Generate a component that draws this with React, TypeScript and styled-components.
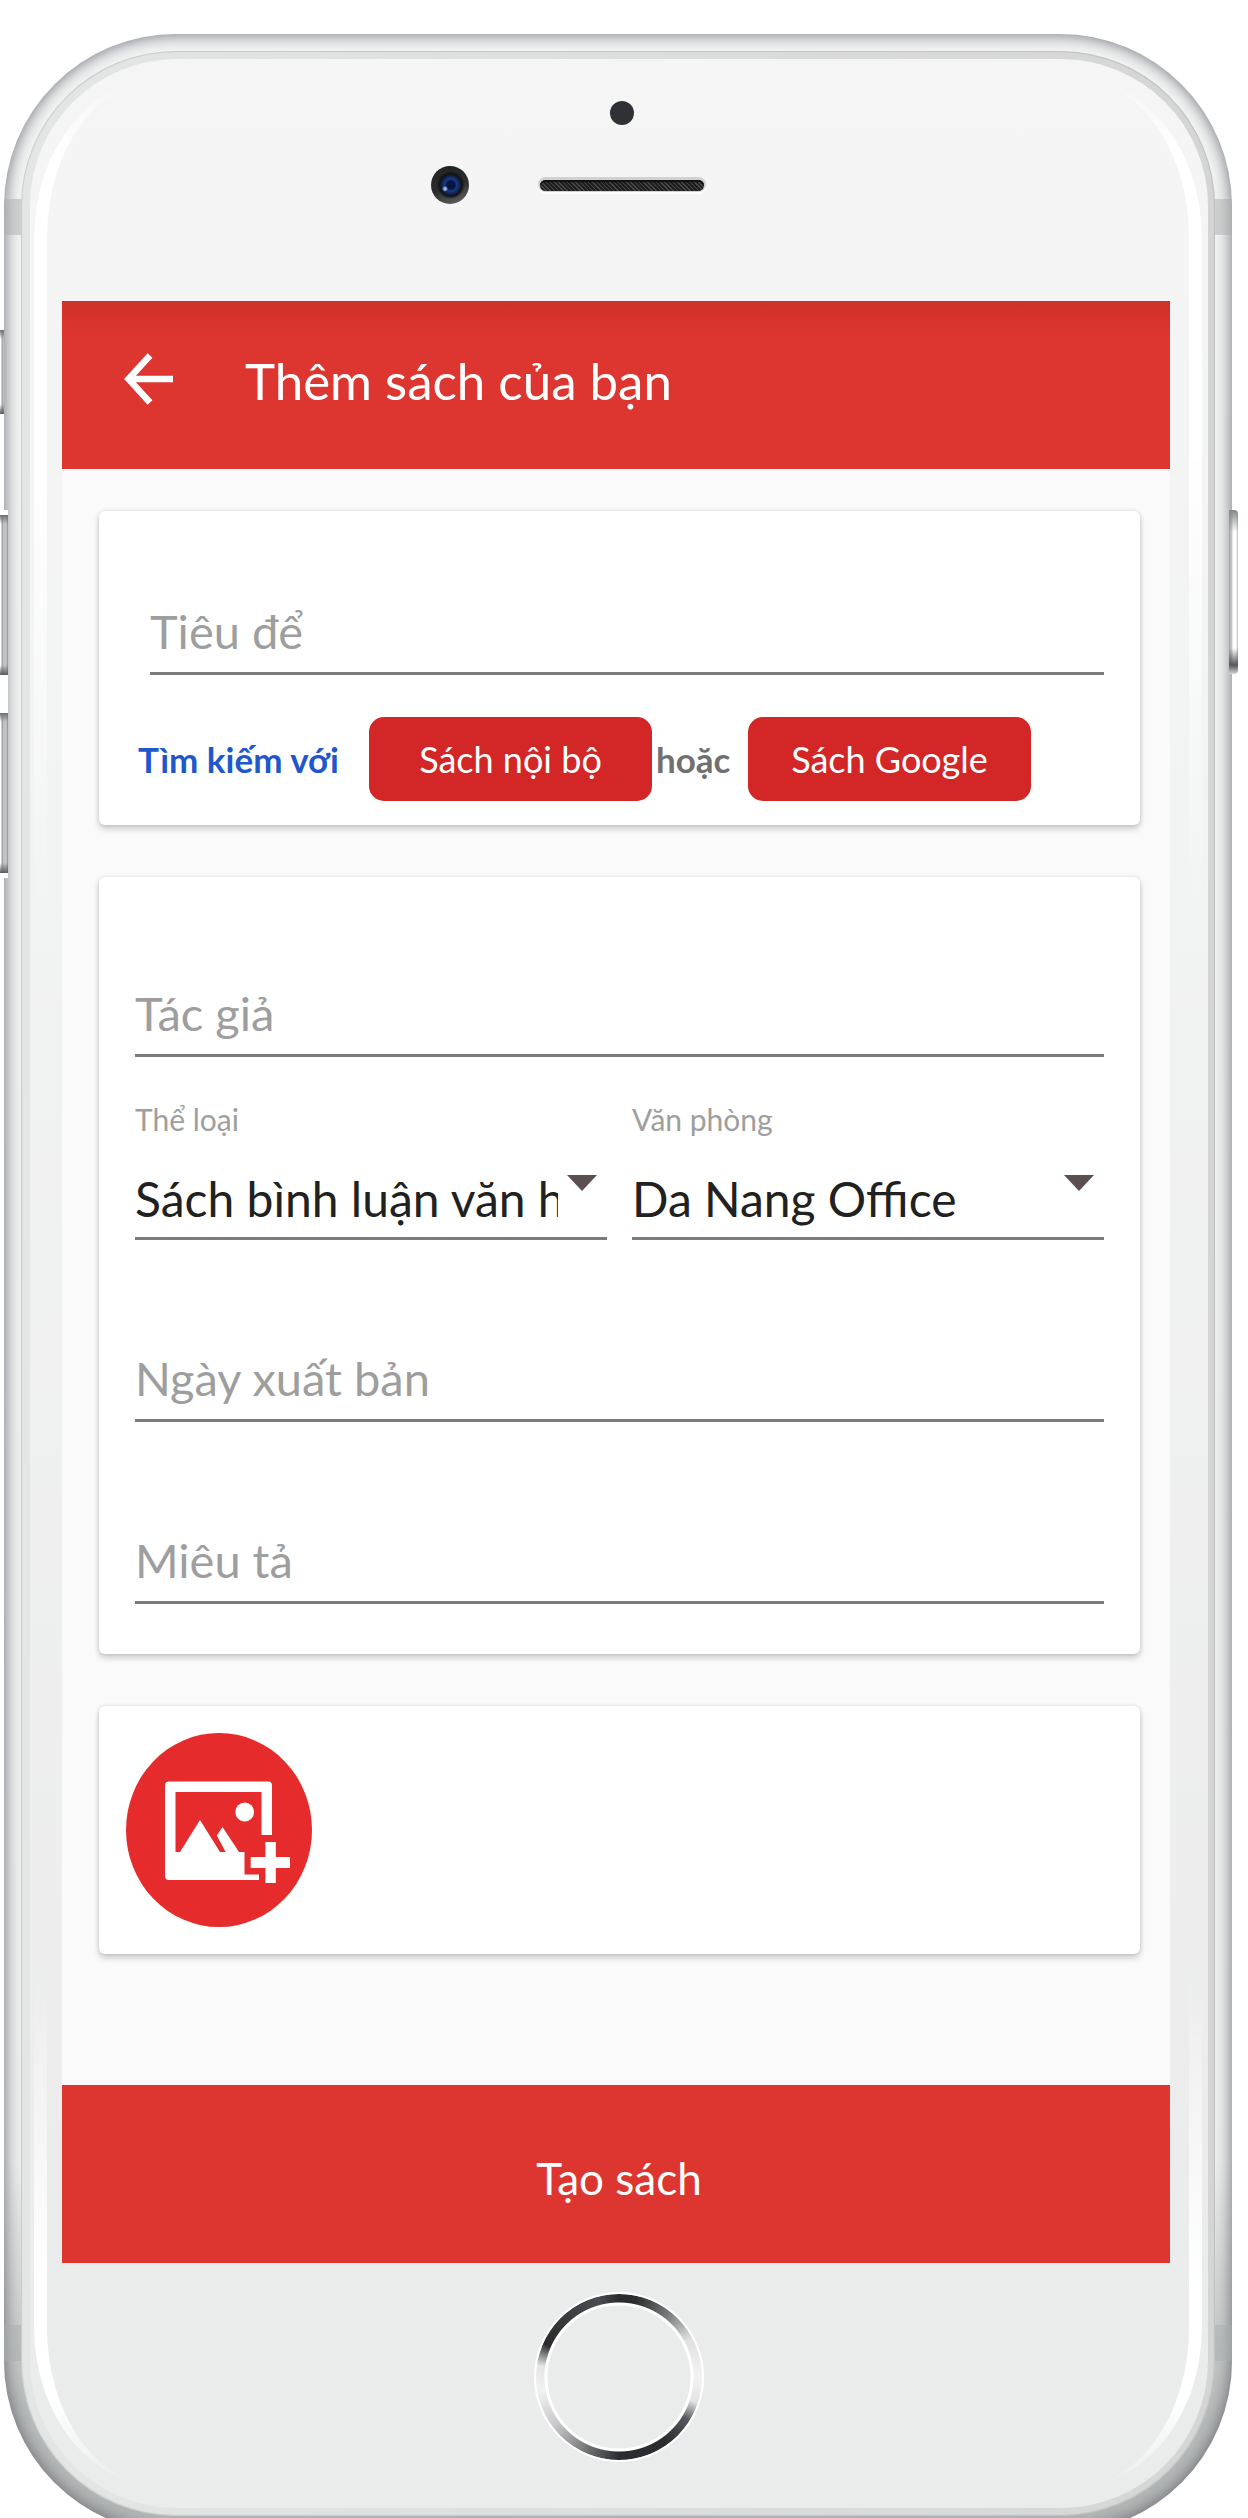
import React from "react";
import styled, { createGlobalStyle, css } from "styled-components";

const GlobalStyle = createGlobalStyle`
  *, *::before, *::after { box-sizing: border-box; }
  body { margin: 0; background: #ffffff; font-family: Lato, "Noto Sans", sans-serif; }
  button, input, select { font-family: inherit; }
`;

const red = "#dd352f";
const grey = "#9e9e9e";
const line = "#7a7c7b";

const Stage = styled.div`
  overflow: hidden;
  padding: 34px 16px 0 4px;
`;

const Phone = styled.div`
  position: relative;
  margin-bottom: -14px;
`;

const Metal = styled.div`
  position: relative;
  padding: 17px;
  border-radius: 172px;
  background: linear-gradient(#f3f5f4 0, #eef0ef 85%, #b9bcbb 95%, #b2b5b4 100%);
  box-shadow: inset 0 0 16px 1px rgba(84, 85, 96, 0.78);
`;

const Rim = styled.div`
  position: relative;
  padding: 8px 7px 8px 9px;
  border-radius: 155px;
  background: linear-gradient(90deg, #e3e6e5 0, #dcdedd 50%, #d4d5d4 100%);
  box-shadow: inset 0 0 1px 1px rgba(150, 154, 152, 0.35);
`;

const Face = styled.div`
  position: relative;
  display: flex;
  flex-direction: column;
  padding: 0 38px 0 32px;
  border-radius: 147px;
  background: linear-gradient(#f5f5f5, #f2f3f3 30%, #ebeceb 85%, #eaeceb);
`;

const Glare = styled.div`
  position: absolute;
  inset: 18px 6px 20px 4px;
  border: 0 solid #ffffff;
  border-width: 0 13px;
  border-radius: 130px / 160px;
  pointer-events: none;
  mask-image: linear-gradient(
    transparent 0,
    #000 80px,
    #000 340px,
    transparent 860px,
    transparent calc(100% - 520px),
    #000 calc(100% - 200px),
    #000 calc(100% - 90px),
    transparent 100%
  );
`;

const Antenna = styled.div<{ $bottom?: boolean }>`
  position: absolute;
  left: 0;
  right: 0;
  height: 36px;
  background: rgba(170, 174, 172, 0.5);
  ${(p) => (p.$bottom ? "bottom: 172px;" : "top: 165px;")}
`;

const Recess = styled.div`
  position: absolute;
  left: -4px;
  top: 476px;
  width: 8px;
  height: 368px;
  background: #ffffff;
`;

const SideKey = styled.div<{ $side: "left" | "right"; $top: number; $height: number; $width: number }>`
  position: absolute;
  top: ${(p) => p.$top}px;
  width: ${(p) => p.$width}px;
  height: ${(p) => p.$height}px;
  ${(p) =>
    p.$side === "left"
      ? css`
          left: -4px;
          background:
            linear-gradient(#6d7073 0, transparent 9px, transparent calc(100% - 10px), #5a5c5f 100%),
            linear-gradient(90deg, #ffffff 0 1px, #96999b 2px, #b8bbbd 3px, #c8cbcc 6px, #8d9092 8px);
        `
      : css`
          right: -6px;
          border-radius: 0 4px 4px 0;
          background:
            linear-gradient(#85888a 0, transparent 22px, transparent calc(100% - 26px), #55575a calc(100% - 9px), #d5d6d7 100%),
            linear-gradient(90deg, #a4a8ab 0, #c8cccf 3px, #ffffff 4px, #ffffff 7px, #b8babc 9px);
        `}
`;

const Sensors = styled.div`
  display: flex;
  flex-direction: column;
  align-items: center;
  gap: 41px;
  height: 242px;
  padding: 42px 0 0 11px;
`;

const Proximity = styled.div`
  width: 24px;
  height: 24px;
  border-radius: 50%;
  background: #303135;
`;

const SensorRow = styled.div`
  display: grid;
  grid-template-columns: 1fr auto 1fr;
  align-items: center;
  gap: 71px;
  width: 100%;
`;

const Camera = styled.div`
  justify-self: end;
  width: 38px;
  height: 38px;
  border-radius: 50%;
  background:
    radial-gradient(circle at 37% 60%, #9fb8e8 0 1px, transparent 3px),
    radial-gradient(circle at 52% 50%, #0a1440 0 4px, #173c86 6px, #0f2350 9px, #101113 11px, transparent 14px),
    linear-gradient(160deg, #1f2121 0, #2c2d2d 55%, #6a6a6a 100%);
`;

const Speaker = styled.div`
  width: 164px;
  height: 11px;
  border-radius: 6px;
  background: repeating-linear-gradient(45deg, #1f1f1f 0 1px, #484848 1px 2px, #1f1f1f 2px 3px);
  box-shadow: 0 -1px 0 2px #d0d1d0, 0 1px 0 2px #ffffff, inset 0 2px 1px #111111;
`;

const Screen = styled.main`
  background: #fafafa;
`;

const Header = styled.header`
  display: flex;
  align-items: center;
  gap: 72px;
  height: 168px;
  padding: 0 62px 12px;
  color: #ffffff;
  background: linear-gradient(#cd312b 0, #d8332d 20px, ${red} 34px);
`;

const IconButton = styled.button`
  display: block;
  padding: 0;
  border: 0;
  color: inherit;
  background: none;
  cursor: pointer;
  svg { display: block; }
`;

const Title = styled.h1`
  margin: 0;
  padding-top: 4px;
  font-size: 51px;
  line-height: 60px;
  font-weight: 400;
`;

const Form = styled.form`
  display: flex;
  flex-direction: column;
`;

const Cards = styled.div`
  display: flex;
  flex-direction: column;
  gap: 52px;
  padding: 42px 30px 131px 37px;
`;

const Card = styled.section<{ $pad: string }>`
  padding: ${(p) => p.$pad};
  border-radius: 6px;
  background: #ffffff;
  box-shadow: 0 4px 6px rgba(0, 0, 0, 0.18), 0 0 4px rgba(0, 0, 0, 0.12);
`;

const TextField = styled.input`
  display: block;
  width: 100%;
  height: 74px;
  padding: 0 0 11px;
  border: 0;
  border-bottom: 3px solid ${line};
  border-radius: 0;
  outline: 0;
  color: #212121;
  background: none;
  font-size: 47px;
  line-height: 60px;
  &::placeholder { color: ${grey}; opacity: 1; }
`;

const TitleField = styled.div`
  padding-left: 15px;
`;

const SearchRow = styled.div`
  display: flex;
  align-items: center;
  margin-top: 42px;
  padding-left: 3px;
  font-size: 35px;
  line-height: 44px;
  font-weight: 700;
  white-space: nowrap;
`;

const SearchLabel = styled.span`
  width: 231px;
  color: #2058cc;
`;

const OrLabel = styled.span`
  width: 96px;
  padding-left: 4px;
  color: #707070;
`;

const SearchButton = styled.button`
  width: 283px;
  height: 84px;
  padding: 0;
  border: 0;
  border-radius: 15px;
  color: #ffffff;
  background: #d32626;
  font-size: 36px;
  line-height: 44px;
  cursor: pointer;
`;

const Details = styled.div`
  display: flex;
  flex-direction: column;
  gap: 108px;
`;

const Group = styled.div`
  display: flex;
  flex-direction: column;
  gap: 42px;
`;

const SelectRow = styled.div`
  display: grid;
  grid-template-columns: 1fr 1fr;
  gap: 25px;
`;

const SelectField = styled.div`
  display: flex;
  flex-direction: column;
  gap: 29px;
  min-width: 0;
`;

const Label = styled.label`
  color: ${grey};
  font-size: 30px;
  line-height: 40px;
`;

const SelectBox = styled.div`
  position: relative;
  border-bottom: 3px solid ${line};
  &::after {
    content: "";
    position: absolute;
    top: 7px;
    right: 10px;
    border: 15px solid transparent;
    border-width: 16px 15px 0;
    border-top-color: #5b4f4f;
    pointer-events: none;
  }
`;

const Select = styled.select`
  display: block;
  width: 100%;
  height: 69px;
  padding: 0 49px 8px 0;
  border: 0;
  outline: 0;
  appearance: none;
  color: #212121;
  background: none;
  font-size: 48px;
  line-height: 60px;
`;

const SubmitButton = styled.button`
  height: 178px;
  padding: 8px 0 0 6px;
  border: 0;
  color: #ffffff;
  background: ${red};
  font-size: 44px;
  line-height: 52px;
  cursor: pointer;
`;

const Chin = styled.div`
  display: flex;
  justify-content: center;
  height: 245px;
  padding: 29px 0 0 5px;
`;

const HomeButton = styled.button`
  width: 170px;
  height: 170px;
  padding: 0;
  border: 2px solid #ffffff;
  border-radius: 50%;
  background:
    radial-gradient(circle closest-side, #eaeceb 0 71px, #ffffff 72px 74px, transparent 75px) padding-box,
    conic-gradient(
      #2b2c2e 0,
      #2b2c2e 12deg,
      #77797a 38deg,
      #e0e0e0 62deg,
      #f3f3f3 90deg,
      #e3e3e6 108deg,
      #56575d 122deg,
      #2b2c2f 145deg,
      #2b2c2f 180deg,
      #77777a 205deg,
      #c6c6c9 232deg,
      #f1f1f1 260deg,
      #e6e6e8 278deg,
      #2b2b2d 294deg,
      #38393b 315deg,
      #4a4c51 345deg,
      #2b2c2e 360deg
    ) padding-box;
`;

const BackArrow = () => (
  <svg width="49" height="52" viewBox="0 0 49 52" fill="none" stroke="currentColor" strokeWidth="6.5">
    <path d="M49 26H5M26 2.5L4.5 26L26 49.5" />
  </svg>
);

const AddPicture = () => (
  <svg width="186" height="194" viewBox="126 1732 186 194">
    <ellipse cx="219" cy="1829" rx="93" ry="97" fill="#e52b2b" />
    <g fill="#ffffff">
      <path d="M169 1780.5H268Q272 1780.5 272 1784.5V1834H261.5V1791H175.5V1851H180L200 1819L220 1851H225.6L216.8 1834.5L222.5 1826L239 1851H244.5V1873.5H259V1879H169Q165 1879 165 1875V1784.5Q165 1780.5 169 1780.5Z" />
      <circle cx="244.7" cy="1811" r="9.4" />
      <path d="M265.4 1841H275.8V1856H290V1867H275.8V1882H265.4V1867H250.7V1856H265.4Z" />
    </g>
  </svg>
);

export default function App() {
  return (
    <>
      <GlobalStyle />
      <Stage>
        <Phone>
          <Metal>
            <Antenna />
            <Antenna $bottom />
            <Rim>
              <Face>
                <Glare />
                <Sensors>
                  <Proximity />
                  <SensorRow>
                    <Camera />
                    <Speaker />
                  </SensorRow>
                </Sensors>
                <Screen>
                  <Header>
                    <IconButton type="button" aria-label="Quay lại">
                      <BackArrow />
                    </IconButton>
                    <Title>Thêm sách của bạn</Title>
                  </Header>
                  <Form onSubmit={(e) => e.preventDefault()}>
                    <Cards>
                      <Card $pad="90px 36px 24px">
                        <TitleField>
                          <TextField aria-label="Tiêu để" placeholder="Tiêu để" />
                        </TitleField>
                        <SearchRow>
                          <SearchLabel>Tìm kiếm với</SearchLabel>
                          <SearchButton type="button">Sách nội bộ</SearchButton>
                          <OrLabel>hoặc</OrLabel>
                          <SearchButton type="button">Sách Google</SearchButton>
                        </SearchRow>
                      </Card>
                      <Card $pad="106px 36px 50px">
                        <Details>
                          <Group>
                            <TextField aria-label="Tác giả" placeholder="Tác giả" />
                            <SelectRow>
                              <SelectField>
                                <Label htmlFor="category">Thể loại</Label>
                                <SelectBox>
                                  <Select id="category">
                                    <option>Sách bình luận văn học</option>
                                  </Select>
                                </SelectBox>
                              </SelectField>
                              <SelectField>
                                <Label htmlFor="office">Văn phòng</Label>
                                <SelectBox>
                                  <Select id="office">
                                    <option>Da Nang Office</option>
                                  </Select>
                                </SelectBox>
                              </SelectField>
                            </SelectRow>
                          </Group>
                          <TextField aria-label="Ngày xuất bản" placeholder="Ngày xuất bản" />
                          <TextField aria-label="Miêu tả" placeholder="Miêu tả" />
                        </Details>
                      </Card>
                      <Card $pad="27px">
                        <IconButton type="button" aria-label="Thêm ảnh">
                          <AddPicture />
                        </IconButton>
                      </Card>
                    </Cards>
                    <SubmitButton type="submit">Tạo sách</SubmitButton>
                  </Form>
                </Screen>
                <Chin>
                  <HomeButton type="button" aria-label="Home" />
                </Chin>
              </Face>
            </Rim>
          </Metal>
          <Recess />
          <SideKey $side="left" $top={296} $height={84} $width={4} />
          <SideKey $side="left" $top={481} $height={160} $width={8} />
          <SideKey $side="left" $top={679} $height={160} $width={8} />
          <SideKey $side="right" $top={476} $height={164} $width={9} />
        </Phone>
      </Stage>
    </>
  );
}
